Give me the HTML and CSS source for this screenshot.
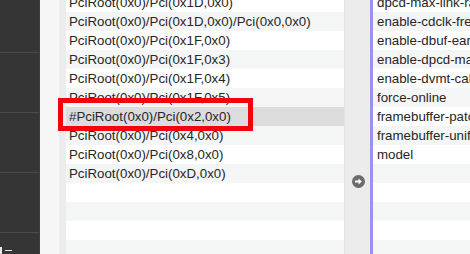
FILE: index.html
```html
<!DOCTYPE html>
<html lang="en">
<head>
    <meta charset="UTF-8">
    <title>Device Properties</title>
    <link rel="stylesheet" href="styles.css">
</head>
<body>
<div class="window">
    <div class="sidebar">
        <div class="side-cell first"></div>
        <div class="side-cell"></div>
        <div class="side-cell"></div>
        <div class="side-cell"></div>
        <div class="side-tools">
            <span class="tool-plus"></span>
            <span class="tool-minus"></span>
        </div>
    </div>
    <div class="gutter"></div>
    <div class="gutter-edge"></div>

    <div class="table keys">
        <div class="rows">
            <div class="row">PciRoot(0x0)/Pci(0x1D,0x0)</div>
            <div class="row">PciRoot(0x0)/Pci(0x1D,0x0)/Pci(0x0,0x0)</div>
            <div class="row">PciRoot(0x0)/Pci(0x1F,0x0)</div>
            <div class="row">PciRoot(0x0)/Pci(0x1F,0x3)</div>
            <div class="row">PciRoot(0x0)/Pci(0x1F,0x4)</div>
            <div class="row">PciRoot(0x0)/Pci(0x1F,0x5)</div>
            <div class="row selected">
                #PciRoot(0x0)/Pci(0x2,0x0)
                <div class="highlight"></div>
            </div>
            <div class="row">PciRoot(0x0)/Pci(0x4,0x0)</div>
            <div class="row">PciRoot(0x0)/Pci(0x8,0x0)</div>
            <div class="row">PciRoot(0x0)/Pci(0xD,0x0)</div>
            <div class="row"></div>
            <div class="row"></div>
            <div class="row"></div>
            <div class="row"></div>
        </div>
    </div>

    <div class="divider">
        <div class="go-btn">
            <svg width="13" height="13" viewBox="0 0 13 13">
                <circle cx="6.5" cy="6.5" r="6.5" fill="#6b6b6b"/>
                <path d="M3 5.5h3.6V3.4l3.3 3.1-3.3 3.1V7.5H3z" fill="#fff"/>
            </svg>
        </div>
    </div>
    <div class="focus-line"></div>

    <div class="table values">
        <div class="rows">
            <div class="row">dpcd-max-link-rate</div>
            <div class="row">enable-cdclk-frequency-fix</div>
            <div class="row">enable-dbuf-early-optimizer</div>
            <div class="row">enable-dpcd-max-link-rate-fix</div>
            <div class="row">enable-dvmt-calc-fix</div>
            <div class="row">force-online</div>
            <div class="row">framebuffer-patch-enable</div>
            <div class="row">framebuffer-unifiedmem</div>
            <div class="row">model</div>
            <div class="row"></div>
            <div class="row"></div>
            <div class="row"></div>
            <div class="row"></div>
            <div class="row"></div>
        </div>
    </div>
</div>
</body>
</html>
```

FILE: styles.css
```css
body {
    margin: 0;
    font-family: 'Liberation Sans', Arial, sans-serif;
    font-size: 13.3px;
    color: #262626;
    background-color: #f6f6f6;
}

.window {
    display: flex;
    width: 470px;
    height: 254px;
    overflow: hidden;
}

.sidebar {
    width: 39px;
    flex-shrink: 0;
    background-color: #353535;
    border-right: 1px solid #3e3e3e;
    display: flex;
    flex-direction: column;
}

.side-cell {
    height: 59px;
    border-bottom: 1px solid #4a4a4a;
}

.side-cell.first {
    height: 52px;
}

.side-tools {
    margin-top: auto;
    display: flex;
    align-items: flex-end;
    height: 7px;
    gap: 3px;
}

.tool-plus {
    width: 2px;
    height: 7px;
    background-color: #e8e8e8;
}

.tool-minus {
    width: 7px;
    height: 1px;
    margin-bottom: 3px;
    background-color: #e8e8e8;
}

.gutter {
    width: 19px;
    flex-shrink: 0;
    background-color: #f6f6f6;
}

.gutter-edge {
    width: 7px;
    flex-shrink: 0;
    background-color: #ececec;
}

.table {
    flex-shrink: 0;
}

.keys {
    width: 278px;
}

.values {
    flex: 1;
    overflow: hidden;
}

.rows {
    margin-top: -7px;
}

.row {
    height: 19px;
    line-height: 19px;
    padding-left: 3px;
    white-space: nowrap;
    background-color: #ffffff;
}

.values .row {
    padding-left: 4px;
}

.row:nth-child(even) {
    background-color: #f4f5f5;
}

.row.selected {
    position: relative;
    background-color: #dcdcdc;
}

/* red annotation frame over the selected row */
.highlight {
    position: absolute;
    z-index: 2;
    left: -8px;
    top: -9px;
    width: 185px;
    height: 23px;
    border: 5px solid #f5000f;
}

.divider {
    width: 26px;
    flex-shrink: 0;
    background-color: #ececec;
    border-left: 1px solid #e2e2e2;
    padding-top: 175px;
    box-sizing: border-box;
}

.go-btn {
    display: flex;
    justify-content: center;
    padding-left: 2px;
}

.go-btn svg {
    display: block;
}

.focus-line {
    width: 3px;
    flex-shrink: 0;
    background-color: #9c90f0;
}
```
